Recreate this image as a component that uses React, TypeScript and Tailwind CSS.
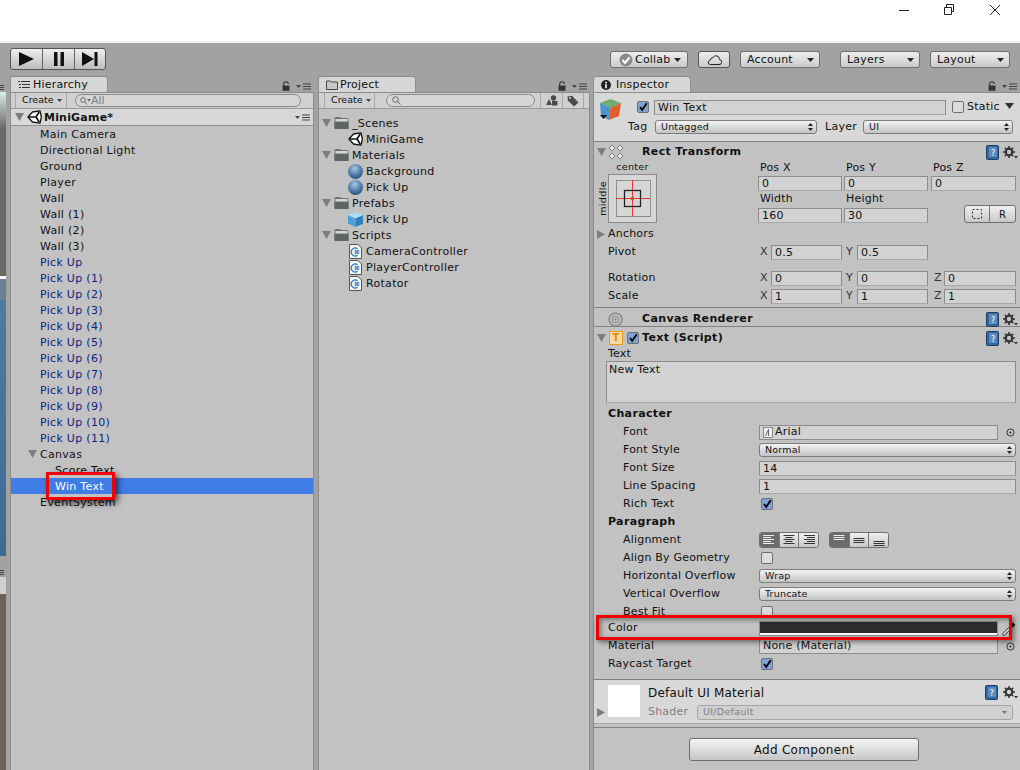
import React from 'react';

const hierarchyItems = [
  'Main Camera', 'Directional Light', 'Ground', 'Player', 'Wall', 'Wall (1)', 'Wall (2)', 'Wall (3)',
];
const pickUps = ['Pick Up', 'Pick Up (1)', 'Pick Up (2)', 'Pick Up (3)', 'Pick Up (4)', 'Pick Up (5)', 'Pick Up (6)', 'Pick Up (7)', 'Pick Up (8)', 'Pick Up (9)', 'Pick Up (10)', 'Pick Up (11)'];

const TriDown = ({ className = '' }: { className?: string }) => (
  <svg width="9" height="8" viewBox="0 0 9 8" className={`shrink-0 ${className}`}><polygon points="0,0 9,0 4.5,8" fill="#7d7d7d" /></svg>
);
const TriRight = ({ className = '' }: { className?: string }) => (
  <svg width="8" height="9" viewBox="0 0 8 9" className={`shrink-0 ${className}`}><polygon points="0,0 8,4.5 0,9" fill="#7d7d7d" /></svg>
);
const Caret = ({ className = '' }: { className?: string }) => (
  <svg width="7" height="4" viewBox="0 0 7 4" className={`shrink-0 ${className}`}><polygon points="0,0 7,0 3.5,4" fill="#222" /></svg>
);
const UpDown = () => (
  <svg width="5" height="8" viewBox="0 0 5 8" className="shrink-0"><polygon points="2.5,0 5,3 0,3" fill="#222" /><polygon points="0,5 5,5 2.5,8" fill="#222" /></svg>
);
const MenuIcon = () => (
  <svg width="15" height="7" viewBox="0 0 15 7" className="shrink-0">
    <polygon points="0,2 5,2 2.5,5" fill="#444" />
    <path d="M7 1H15M7 3.5H15M7 6H15" stroke="#444" strokeWidth="1" />
  </svg>
);
const LockIcon = () => (
  <svg width="8" height="10" viewBox="0 0 8 10" className="shrink-0">
    <path d="M1.7 5V3a2.3 2.3 0 0 1 4.6 0" fill="none" stroke="#333" strokeWidth="1.1" />
    <rect x="0.5" y="4.6" width="7" height="5.2" fill="#333" />
  </svg>
);
const UnityLogo = () => (
  <svg width="15" height="14" viewBox="0 0 15 14" className="shrink-0">
    <path d="M1 7 L5.5 2 L13 0.8 L14.4 7 L13 13.2 L5.5 12 Z" fill="#fff" stroke="#111" strokeWidth="1.3" strokeLinejoin="round" />
    <path d="M2 7 H9 L12.2 2 M9 7 L12.2 12" fill="none" stroke="#111" strokeWidth="1.7" />
  </svg>
);
const FolderIcon = () => (
  <svg width="15" height="14" viewBox="0 0 15 14" className="shrink-0">
    <path d="M0.5 3 Q0.5 1 2 1 H6 L7 2 H13 Q14.5 2 14.5 3.5 V13 H0.5 Z" fill="#6e7474" />
    <rect x="1.5" y="3" width="12" height="2.5" fill="#d5d5d5" />
    <rect x="0.5" y="6" width="14" height="7" fill="#5f6565" />
  </svg>
);
const SphereIcon = () => (
  <svg width="15" height="15" viewBox="0 0 14 14" className="shrink-0">
    <defs>
      <radialGradient id="sph" cx="45%" cy="30%" r="75%">
        <stop offset="0%" stopColor="#a9c6e2" />
        <stop offset="55%" stopColor="#4f7fb0" />
        <stop offset="100%" stopColor="#24476e" />
      </radialGradient>
    </defs>
    <circle cx="7" cy="7" r="7" fill="url(#sph)" />
  </svg>
);
const CubeIcon = () => (
  <svg width="15" height="15" viewBox="0 0 14 14" className="shrink-0">
    <polygon points="7,0 14,3 7,6 0,3" fill="#a9dcf5" />
    <polygon points="0,3 7,6 7,14 0,11" fill="#4fa0d8" />
    <polygon points="14,3 7,6 7,14 14,11" fill="#2f7fbc" />
  </svg>
);
const ScriptIcon = () => (
  <svg width="13" height="15" viewBox="0 0 13 15" className="shrink-0">
    <path d="M0.5 0.5 H9 L12.5 4 V14.5 H0.5 Z" fill="#f4f4f4" stroke="#555" />
    <path d="M8.5 4.7 A4 4 0 1 0 8.5 11.3" fill="none" stroke="#1674b4" strokeWidth="1.2" />
    <path d="M5.5 7 H10.5 M5.5 9 H10.5 M6.8 5.8 V10.2 M8.8 5.8 V10.2" stroke="#1674b4" strokeWidth="0.8" />
  </svg>
);
const HelpBook = () => (
  <svg width="13" height="15" viewBox="0 0 13 15" className="shrink-0">
    <rect x="0.5" y="0.5" width="12" height="14" rx="1" fill="#34679f" stroke="#1f3d63" />
    <rect x="3" y="2" width="8" height="10" fill="#5e8bbd" />
    <text x="7" y="10.5" fontSize="8" fontFamily="DejaVu Sans" textAnchor="middle" fill="#fff">?</text>
  </svg>
);
const GearIcon = () => (
  <svg width="15" height="13" viewBox="0 0 15 13" className="shrink-0">
    <circle cx="6" cy="6" r="3.3" fill="none" stroke="#333" strokeWidth="2.2" />
    <path d="M6 0V12M0 6H12M1.8 1.8L10.2 10.2M10.2 1.8L1.8 10.2" stroke="#333" strokeWidth="1.5" strokeDasharray="2 8" />
    <polygon points="11,10 15,10 13,12.5" fill="#333" />
  </svg>
);
const Check = ({ on = true, className = '' }: { on?: boolean; className?: string }) => (
  <span className={`flex items-center justify-center w-[12px] h-[12px] rounded-[2px] border border-[#6f6f6f] shrink-0 ${on ? 'bg-[#7fa3d4]' : 'bg-[#dcdcdc]'} ${className}`}>
    {on && (
      <svg width="12" height="12" viewBox="0 0 12 12"><path d="M2.5 6 L5 9.5 L10.5 1.5" fill="none" stroke="#000" strokeWidth="2.2" /></svg>
    )}
  </span>
);
const Field = ({ value = '', className = '' }: { value?: string; className?: string }) => (
  <div className={`h-[15px] flex items-center bg-[#d2d2d2] border border-[#8c8c8c] border-b-[#a8a8a8] pl-[3px] text-[11px] leading-none tracking-[0.3px] ${className}`}>{value}</div>
);
const Select = ({ value, className = '' }: { value: string; className?: string }) => (
  <div className={`h-[14px] flex items-center justify-between rounded-[3px] border border-[#7c7c7c] bg-gradient-to-b from-[#f2f2f2] to-[#c4c4c4] pl-[5px] pr-[3px] leading-none text-[9.5px] tracking-[0.2px] ${className}`}>
    <span>{value}</span>
    <UpDown />
  </div>
);
const ToolButton = ({ label, widthClass, gapClass }: { label: string; widthClass: string; gapClass: string }) => (
  <div className={`h-[17px] flex items-center justify-between rounded-[3px] border border-[#6f6f6f] bg-gradient-to-b from-[#efefef] to-[#c9c9c9] pl-[6px] pr-[5px] text-[11px] tracking-[0.2px] ${widthClass} ${gapClass}`}>
    <span className="mt-[2px]">{label}</span>
    <Caret />
  </div>
);
const Row = ({ label, indent = false, children, h = 'h-[18px]', lead = 'w-[165px]' }: { label?: string; indent?: boolean; children?: React.ReactNode; h?: string; lead?: string }) => (
  <div className={`flex items-center pr-[4px] shrink-0 ${h}`}>
    <div className={`shrink-0 text-[11px] tracking-[0.2px] ${lead} ${indent ? 'pl-[29px]' : 'pl-[14px]'}`}>{label}</div>
    <div className="flex-1 min-w-0 flex items-center">{children}</div>
  </div>
);
const XYZ = ({ axis, value, className = '', labelClass = 'w-[13px] pl-[2px]' }: { axis: string; value: string; className?: string; labelClass?: string }) => (
  <div className={`flex items-center ${className}`}>
    <span className={`text-[11px] text-[#333] shrink-0 ${labelClass}`}>{axis}</span>
    <Field value={value} className="flex-1 min-w-0" />
  </div>
);
const ComponentHeader = ({ icon, title, h, pt }: { icon: React.ReactNode; title: string; h: string; pt: string }) => (
  <div className={`flex items-center shrink-0 pl-[3px] pr-[2px] ${h} ${pt}`}>
    <div className="w-[45px] flex items-center shrink-0">{icon}</div>
    <div className="flex-1 font-bold text-[11px] tracking-[0.35px]">{title}</div>
    <HelpBook />
    <div className="w-[4px]" />
    <GearIcon />
  </div>
);
const AlignLines = ({ rows, y, dark, align }: { rows: number[]; y: number; dark?: boolean; align: 'l' | 'c' | 'r' }) => (
  <svg width="12" height="12" viewBox="0 0 12 12">
    {rows.map((w, i) => (
      <rect key={i} x={align === 'l' ? 0 : align === 'c' ? (12 - w) / 2 : 12 - w} y={y + i * 2} width={w} height="1" fill={dark ? '#eee' : '#333'} />
    ))}
  </svg>
);
const Seg = ({ active, children, right }: { active?: boolean; children: React.ReactNode; right?: boolean }) => (
  <div className={`flex-1 flex items-center justify-center ${right ? '' : 'border-r border-[#777]'} ${active ? 'bg-[#6b6b6b]' : 'bg-gradient-to-b from-[#f0f0f0] to-[#c8c8c8]'}`}>{children}</div>
);

const TabBar = ({ icon, title, gapClass }: { icon: React.ReactNode; title: string; gapClass: string }) => (
  <div className="h-[16px] flex items-end justify-between">
    <div className={`w-[98px] h-[16px] flex items-center pl-[7px] rounded-t-[3px] bg-[#d6d6d6] border border-b-0 border-[#8c8c8c] text-[11px] tracking-[0.2px] ${gapClass}`}>
      {icon}
      <span className="mt-[2px]">{title}</span>
    </div>
    <div className="flex items-center gap-[6px] pr-[3px] pb-[1px]">
      <LockIcon />
      <MenuIcon />
    </div>
  </div>
);

const HierarchyPanel = () => (
  <div className="w-[304px] shrink-0 flex flex-col">
    <TabBar
      title="Hierarchy"
      gapClass="gap-[3px]"
      icon={
        <svg width="12" height="9" viewBox="0 0 12 9"><path d="M0 1.5H2M3 1.5H12M1 4.5H3M4 4.5H12M1 7.5H3M4 7.5H12" stroke="#333" /></svg>
      }
    />
    <div className="flex-1 bg-[#c2c2c2] border-x border-t border-[#8c8c8c]">
      <div className="h-[16px] flex items-center bg-[#d0d0d0] border-b border-[#9a9a9a] pl-[4px] pr-[12px]">
        <div className="w-[52px] h-full flex items-center justify-between border-x border-[#a8a8a8] pl-[6px] pr-[4px] text-[9.5px]">
          <span>Create</span>
          <svg width="5" height="3" viewBox="0 0 5 3"><polygon points="0,0 5,0 2.5,3" fill="#444" /></svg>
        </div>
        <div className="flex-1 h-[13px] ml-[8px] rounded-full border border-[#888] bg-[#d6d6d6] flex items-center pl-[4px] text-[11px] text-[#7c7c7c]">
          <svg width="11" height="8" viewBox="0 0 11 8" className="shrink-0"><circle cx="3" cy="3" r="2.3" fill="none" stroke="#666" /><path d="M5 5L7 7.5" stroke="#666" /><polygon points="7,2 11,2 9,4.5" fill="#666" /></svg>
          <span className="leading-none">All</span>
        </div>
      </div>
      <div className="h-[17px] flex items-center bg-[#d8d8d8] border-b border-[#8f8f8f] pl-[4px] pr-[3px]">
        <TriDown />
        <div className="ml-[3px]"><UnityLogo /></div>
        <span className="ml-[2px] mt-[2px] flex-1 font-bold text-[11px] tracking-[0.2px]">MiniGame*</span>
        <MenuIcon />
      </div>
      <div className="text-[11px] tracking-[0.3px]">
        {hierarchyItems.map((name) => (
          <div key={name} className="h-[16px] flex items-center pt-[2px] pl-[29px]">{name}</div>
        ))}
        {pickUps.map((name) => (
          <div key={name} className="h-[16px] flex items-center pt-[2px] pl-[29px] text-[#0a2480]">{name}</div>
        ))}
        <div className="h-[16px] flex items-center pl-[17px]">
          <TriDown />
          <span className="ml-[3px] mt-[2px]">Canvas</span>
        </div>
        <div className="h-[16px] flex items-center pt-[2px] pl-[44px]">Score Text</div>
        <div className="h-[16px] flex items-center pt-[2px] pl-[44px] bg-[#3f7ce6] text-white">Win Text</div>
        <div className="h-[16px] flex items-center pt-[2px] pl-[29px]">EventSystem</div>
      </div>
    </div>
  </div>
);

const ProjectRow = ({ icon, name, child }: { icon: React.ReactNode; name: string; child?: boolean }) => (
  <div className={`h-[16px] flex items-center ${child ? 'pl-[29px]' : 'pl-[3px]'}`}>
    {!child && <TriDown className="mr-[3px]" />}
    <span className="w-[15px] shrink-0 flex items-center justify-center">{icon}</span>
    <span className="ml-[3px] mt-[2px]">{name}</span>
  </div>
);

const ProjectPanel = () => (
  <div className="w-[272px] shrink-0 flex flex-col">
    <TabBar
      title="Project"
      gapClass="gap-[2px]"
      icon={
        <svg width="12" height="10" viewBox="0 0 12 10"><path d="M0.5 9.5V1H4.5L5.5 2H11.5V9.5Z" fill="#c8c8c8" stroke="#444" /></svg>
      }
    />
    <div className="flex-1 bg-[#c2c2c2] border-x border-t border-[#8c8c8c]">
      <div className="h-[16px] flex items-center bg-[#d0d0d0] border-b border-[#9a9a9a] pl-[5px]">
        <div className="w-[51px] h-full flex items-center justify-between border-x border-[#a8a8a8] pl-[6px] pr-[3px] text-[9.5px]">
          <span>Create</span>
          <svg width="5" height="3" viewBox="0 0 5 3"><polygon points="0,0 5,0 2.5,3" fill="#444" /></svg>
        </div>
        <div className="w-[149px] h-[13px] ml-[11px] rounded-full border border-[#888] bg-[#d6d6d6] flex items-center pl-[5px]">
          <svg width="9" height="9" viewBox="0 0 9 9"><circle cx="3.5" cy="3.5" r="2.8" fill="none" stroke="#666" /><path d="M5.5 5.5L8.5 8.5" stroke="#666" /></svg>
        </div>
        <div className="w-[22px] h-full ml-[5px] flex items-center justify-center border-l border-[#a8a8a8]">
          <svg width="12" height="11" viewBox="0 0 12 11"><polygon points="3,4 6,10 0,10" fill="#4a4a4a" /><circle cx="7.5" cy="3" r="2.7" fill="#4a4a4a" /><rect x="6" y="6" width="5.5" height="4.5" fill="#4a4a4a" /></svg>
        </div>
        <div className="w-[22px] h-full flex items-center justify-center border-x border-[#a8a8a8]">
          <svg width="12" height="12" viewBox="0 0 12 12"><path d="M0.5 1.5 L5 0.8 L11.5 7.5 L7 11.5 L0.8 5.5 Z" fill="#4a4a4a" /><circle cx="3" cy="3" r="1" fill="#d0d0d0" /></svg>
        </div>
      </div>
      <div className="pt-[6px] text-[11px] tracking-[0.3px]">
        <ProjectRow icon={<FolderIcon />} name="_Scenes" />
        <ProjectRow icon={<UnityLogo />} name="MiniGame" child />
        <ProjectRow icon={<FolderIcon />} name="Materials" />
        <ProjectRow icon={<SphereIcon />} name="Background" child />
        <ProjectRow icon={<SphereIcon />} name="Pick Up" child />
        <ProjectRow icon={<FolderIcon />} name="Prefabs" />
        <ProjectRow icon={<CubeIcon />} name="Pick Up" child />
        <ProjectRow icon={<FolderIcon />} name="Scripts" />
        <ProjectRow icon={<ScriptIcon />} name="CameraController" child />
        <ProjectRow icon={<ScriptIcon />} name="PlayerController" child />
        <ProjectRow icon={<ScriptIcon />} name="Rotator" child />
      </div>
    </div>
  </div>
);

const RectTransformBody = () => (
  <div className="h-[148px] border-b border-[#808080] shrink-0">
    <div className="h-[65px] flex">
      <div className="w-[164px] shrink-0 flex pl-[3px]">
        <div className="w-[11px] h-[49px] mt-[14px] flex items-center justify-center">
          <span className="[writing-mode:vertical-rl] rotate-180 text-[9.5px] tracking-[0.4px] leading-none">middle</span>
        </div>
        <div className="flex flex-col items-center">
          <span className="h-[14px] text-[9.5px] tracking-[0.3px] leading-[14px]">center</span>
          <svg width="49" height="49" viewBox="0 0 49 49">
            <rect x="0.5" y="0.5" width="48" height="48" fill="#d6d6d6" stroke="#8a8a8a" />
            <rect x="8.5" y="6.5" width="34" height="36" fill="none" stroke="#8f8f8f" />
            <path d="M8 24.5H42M24.5 6V42" stroke="#e33" />
            <rect x="16.5" y="16.5" width="16" height="16" fill="none" stroke="#222" strokeWidth="1.3" />
            <rect x="23" y="23" width="3" height="3" fill="#a06a10" />
          </svg>
        </div>
      </div>
      <div className="flex-1 flex flex-col text-[11px] tracking-[0.2px]">
        <div className="flex h-[16px] items-center">
          <span className="w-[88px] pl-[2px]">Pos X</span><span className="w-[87px]">Pos Y</span><span>Pos Z</span>
        </div>
        <div className="flex gap-[2px] pr-[4px]">
          <Field value="0" className="w-[84px]" /><Field value="0" className="w-[84px]" /><Field value="0" className="flex-1 ml-[1px]" />
        </div>
        <div className="flex h-[17px] items-center">
          <span className="w-[88px] pl-[2px]">Width</span><span>Height</span>
        </div>
        <div className="flex gap-[2px] items-center">
          <Field value="160" className="w-[84px]" /><Field value="30" className="w-[84px]" />
          <div className="ml-[34px] mt-[-3px] w-[52px] h-[18px] flex rounded-[3px] border border-[#6f6f6f] bg-gradient-to-b from-[#f0f0f0] to-[#c8c8c8] text-[10px]">
            <div className="w-[25px] flex items-center justify-center border-r border-[#777]">
              <svg width="10" height="10" viewBox="0 0 10 10"><rect x="0.5" y="0.5" width="9" height="9" fill="none" stroke="#333" strokeDasharray="2 2" /></svg>
            </div>
            <div className="flex-1 flex items-center justify-center">R</div>
          </div>
        </div>
      </div>
    </div>
    <div className="h-[18px] flex items-center pl-[3px] text-[11px] tracking-[0.2px]">
      <TriRight />
      <span className="ml-[3px]">Anchors</span>
    </div>
    <Row label="Pivot" lead="w-[164px]">
      <XYZ axis="X" value="0.5" className="w-[84px]" /><XYZ axis="Y" value="0.5" className="w-[84px] ml-[2px]" />
    </Row>
    <div className="h-[8px]" />
    <Row label="Rotation" lead="w-[164px]">
      <XYZ axis="X" value="0" className="w-[84px]" /><XYZ axis="Y" value="0" className="w-[84px] ml-[2px]" /><XYZ axis="Z" value="0" className="ml-[2px] flex-1" labelClass="w-[14px] pl-[4px]" />
    </Row>
    <Row label="Scale" lead="w-[164px]">
      <XYZ axis="X" value="1" className="w-[84px]" /><XYZ axis="Y" value="1" className="w-[84px] ml-[2px]" /><XYZ axis="Z" value="1" className="ml-[2px] flex-1" labelClass="w-[14px] pl-[4px]" />
    </Row>
  </div>
);

const InspectorPanel = () => (
  <div className="flex-1 min-w-0 flex flex-col">
    <TabBar
      title="Inspector"
      gapClass="gap-[5px]"
      icon={
        <svg width="10" height="10" viewBox="0 0 10 10" className="shrink-0"><circle cx="5" cy="5" r="5" fill="#222" /><rect x="4.2" y="1.8" width="1.6" height="1.6" fill="#fff" /><rect x="4.2" y="4.2" width="1.6" height="4" fill="#fff" /></svg>
      }
    />
    <div className="flex-1 flex flex-col bg-[#c2c2c2] border-l border-t border-[#8c8c8c]">
      <div className="h-[49px] shrink-0 bg-[#d8d8d8] border-b border-[#808080] flex">
        <div className="w-[34px] shrink-0 pl-[5px] pt-[6px]">
          <svg width="23" height="22" viewBox="0 0 23 22">
            <polygon points="11.5,0 22,4 11.5,9 1,4" fill="#6fae74" />
            <polygon points="1,4 11.5,9 10,21 2,17" fill="#4d93cf" />
            <polygon points="22,4 11.5,9 10,21 20,17" fill="#de5f2a" />
            <polygon points="1,16 8,16 4.5,20" fill="#111" />
          </svg>
        </div>
        <div className="flex-1 min-w-0 flex flex-col pt-[6px]">
          <div className="h-[16px] flex items-center">
            <Check className="ml-[9px]" />
            <Field value="Win Text" className="ml-[5px] w-[292px] tracking-[0.3px]" />
            <Check on={false} className="ml-[6px]" />
            <span className="ml-[3px] text-[11px] tracking-[0.2px]">Static</span>
            <svg width="9" height="6" viewBox="0 0 9 6" className="ml-[5px] mb-[3px]"><polygon points="0,0 9,0 4.5,6" fill="#333" /></svg>
          </div>
          <div className="h-[17px] mt-[3px] flex items-center text-[11px] tracking-[0.3px]">
            <span className="w-[21px] mt-[2px]">Tag</span>
            <Select value="Untagged" className="ml-[6px] w-[162px]" />
            <span className="ml-[8px] w-[32px] mt-[2px]">Layer</span>
            <Select value="UI" className="ml-[6px] w-[150px]" />
          </div>
        </div>
      </div>
      <ComponentHeader h="h-[18px]" pt="pt-[2px]" title="Rect Transform" icon={
        <span className="flex items-center gap-[2px]">
          <TriDown />
          <svg width="16" height="16" viewBox="0 0 16 16"><g fill="#e2e2e2" stroke="#777" strokeWidth="0.9" strokeLinejoin="round"><polygon points="4,0.8 7,4 4,7 1,4" /><polygon points="12,0.8 15,4 12,7 9,4" /><polygon points="4,9 7,12 4,15.2 1,12" /><polygon points="12,9 15,12 12,15.2 9,12" /></g></svg>
        </span>
      } />
      <RectTransformBody />
      <div className="h-[19px] shrink-0 border-b border-[#808080]">
        <ComponentHeader h="h-[18px]" pt="pt-[4px]" title="Canvas Renderer" icon={
          <svg width="15" height="15" viewBox="0 0 14 14" className="ml-[11px]"><circle cx="7" cy="7" r="6" fill="none" stroke="#8f8f8f" strokeWidth="1.6" /><circle cx="7" cy="7" r="3" fill="none" stroke="#8f8f8f" /><circle cx="7" cy="7" r="1.2" fill="#8f8f8f" /></svg>
        } />
      </div>
      <div className="h-[20px] shrink-0 flex items-center pt-[2px] pl-[3px] pr-[2px]">
        <TriDown />
        <span className="ml-[3px] w-[14px] h-[14px] border border-[#f09a10] bg-[#f5d9a8] flex items-center justify-center text-[10px] font-bold text-[#e8860a] leading-none">T</span>
        <Check className="ml-[4px]" />
        <span className="ml-[3px] flex-1 font-bold text-[11px] tracking-[0.35px]">Text (Script)</span>
        <HelpBook />
        <div className="w-[4px]" />
        <GearIcon />
      </div>
      <div className="h-[14px] shrink-0 flex items-center pl-[14px] text-[11px] tracking-[0.2px]">Text</div>
      <div className="h-[42px] shrink-0 ml-[12px] mr-[4px] bg-[#d2d2d2] border border-[#8c8c8c] border-b-[#a8a8a8] pl-[2px] pt-[1px] text-[11px] tracking-[0.2px] leading-[14px]">New Text</div>
      <div className="h-[18px] mt-[2px] shrink-0 flex items-center pl-[14px] font-bold text-[11px] tracking-[0.35px]">Character</div>
      <Row label="Font" indent>
        <div className="flex-1 flex items-center">
          <div className="w-[239px] h-[15px] flex items-center bg-[#d2d2d2] border border-[#8c8c8c] pl-[3px] text-[11px] tracking-[0.2px]">
            <svg width="10" height="11" viewBox="0 0 10 11" className="shrink-0 mr-[2px]"><rect x="0.5" y="0.5" width="9" height="10" fill="#eee" stroke="#888" /><path d="M2.5 9L5.5 2.5V9" fill="none" stroke="#667" /></svg>
            <span>Arial</span>
          </div>
          <svg width="9" height="9" viewBox="0 0 9 9" className="ml-[8px]"><circle cx="4.5" cy="4.5" r="3.6" fill="none" stroke="#333" /><circle cx="4.5" cy="4.5" r="1.1" fill="#333" /></svg>
        </div>
      </Row>
      <Row label="Font Style" indent><Select value="Normal" className="flex-1" /></Row>
      <Row label="Font Size" indent><Field value="14" className="flex-1" /></Row>
      <Row label="Line Spacing" indent><Field value="1" className="flex-1" /></Row>
      <Row label="Rich Text" indent><Check className="ml-[2px]" /></Row>
      <div className="h-[18px] shrink-0 flex items-center pl-[14px] font-bold text-[11px] tracking-[0.35px]">Paragraph</div>
      <Row label="Alignment" indent>
        <div className="flex w-[60px] h-[16px] rounded-[3px] overflow-hidden border border-[#6f6f6f]">
          <Seg active><AlignLines rows={[11, 8, 11, 8, 11]} y={1} dark align="l" /></Seg>
          <Seg><AlignLines rows={[11, 7, 11, 7, 11]} y={1} align="c" /></Seg>
          <Seg right><AlignLines rows={[11, 8, 11, 8, 11]} y={1} align="r" /></Seg>
        </div>
        <div className="flex w-[60px] h-[16px] ml-[10px] rounded-[3px] overflow-hidden border border-[#6f6f6f]">
          <Seg active><AlignLines rows={[11, 11, 11]} y={1} dark align="c" /></Seg>
          <Seg><AlignLines rows={[11, 11, 11]} y={4} align="c" /></Seg>
          <Seg right><AlignLines rows={[11, 11, 11]} y={7} align="c" /></Seg>
        </div>
      </Row>
      <Row label="Align By Geometry" indent><Check on={false} className="ml-[2px]" /></Row>
      <Row label="Horizontal Overflow" indent><Select value="Wrap" className="flex-1" /></Row>
      <Row label="Vertical Overflow" indent><Select value="Truncate" className="flex-1" /></Row>
      <Row label="Best Fit" indent><Check on={false} className="ml-[2px]" /></Row>
      <Row label="Color" h="h-[15px] mb-[1px]">
        <div className="w-[239px] h-[15px] bg-[#2c2c2c] border border-[#8c8c8c] flex items-end">
          <div className="w-full h-[2px] bg-white" />
        </div>
        <svg width="14" height="14" viewBox="0 0 14 14" className="ml-[4px]"><path d="M1 13L9 5" stroke="#222" strokeWidth="3" /><path d="M1.5 12.5L9 5" stroke="#fff" strokeWidth="1.5" /><path d="M9 3L12 1.5M10.5 5L12.5 2" stroke="#111" strokeWidth="2" /></svg>
      </Row>
      <Row label="Material">
        <div className="w-[239px] h-[15px] flex items-center bg-[#d2d2d2] border border-[#8c8c8c] pl-[3px] text-[11px] tracking-[0.2px]">None (Material)</div>
        <svg width="9" height="9" viewBox="0 0 9 9" className="ml-[8px]"><circle cx="4.5" cy="4.5" r="3.6" fill="none" stroke="#333" /><circle cx="4.5" cy="4.5" r="1.1" fill="#333" /></svg>
      </Row>
      <Row label="Raycast Target"><Check className="ml-[2px]" /></Row>
      <div className="h-[6px] shrink-0" />
      <div className="h-[45px] shrink-0 bg-[#d8d8d8] border-y border-t-[#808080] border-b-[#a8a8a8] flex pl-[3px] pr-[2px]">
        <div className="flex items-end w-[11px] pb-[6px]"><TriRight /></div>
        <div className="w-[32px] h-[32px] mt-[5px] bg-white shrink-0" />
        <div className="flex-1 min-w-0 pl-[8px] flex flex-col">
          <div className="h-[24px] flex items-center justify-between text-[12px] tracking-[0.2px]">
            <span className="mt-[2px]">Default UI Material</span>
            <span className="flex items-center gap-[5px]">
              <HelpBook />
              <GearIcon />
            </span>
          </div>
          <div className="h-[16px] flex items-center text-[11px] tracking-[0.2px] text-[#7f7f7f]">
            <span className="w-[49px] shrink-0">Shader</span>
            <div className="flex-1 h-[15px] mr-[5px] flex items-center justify-between rounded-[3px] border border-[#a5a5a5] bg-[#d0d0d0] pl-[5px] pr-[5px] text-[9.5px] tracking-[0.3px]">
              <span>UI/Default</span>
              <svg width="5" height="3" viewBox="0 0 5 3"><polygon points="0,0 5,0 2.5,3" fill="#777" /></svg>
            </div>
          </div>
        </div>
      </div>
      <div className="h-[4px] shrink-0 border-b border-[#808080]" />
      <div className="flex-1 flex justify-center pt-[10px] pr-[6px]">
        <div className="w-[230px] h-[23px] flex items-center justify-center rounded-[3px] border border-[#6f6f6f] bg-gradient-to-b from-[#f4f4f4] to-[#c6c6c6] text-[12px] tracking-[0.3px]">Add Component</div>
      </div>
    </div>
  </div>
);

export default function App() {
  return (
    <div className="relative w-[1020px] h-[770px] overflow-hidden flex flex-col bg-[#a2a2a2] text-[#111] font-['DejaVu_Sans',sans-serif]">
      <div className="h-[41px] shrink-0 bg-white flex justify-end items-start">
        <svg width="122" height="20" viewBox="0 0 122 20">
          <path d="M1 10.5H11" stroke="#222" />
          <path d="M46.5 7.5H53.5V14.5H46.5Z M48.5 7V4.5H55.5V11.5H53.5" fill="none" stroke="#222" />
          <path d="M92 5L102 15M102 5L92 15" stroke="#222" />
        </svg>
      </div>
      <div className="h-[2px] shrink-0 bg-[#f0f0f0]" />
      <div className="h-[33px] shrink-0 flex items-start pl-[10px]">
        <div className="mt-[5px] flex h-[22px] w-[96px] rounded-[3px] border border-[#555] bg-gradient-to-b from-[#efefef] to-[#bdbdbd]">
          <div className="w-[32px] flex items-center justify-center border-r border-[#666]">
            <svg width="15" height="14" viewBox="0 0 15 14"><polygon points="0,0 15,7 0,14" fill="#111" /></svg>
          </div>
          <div className="w-[32px] flex items-center justify-center border-r border-[#666]">
            <svg width="10" height="14" viewBox="0 0 10 14"><rect width="3.5" height="14" fill="#111" /><rect x="6.5" width="3.5" height="14" fill="#111" /></svg>
          </div>
          <div className="flex-1 flex items-center justify-center">
            <svg width="16" height="14" viewBox="0 0 16 14"><polygon points="0,0 12,7 0,14" fill="#111" /><rect x="12.5" width="3" height="14" fill="#111" /></svg>
          </div>
        </div>
        <div className="ml-[504px] mt-[8px] flex">
          <div className="w-[78px] h-[17px] flex items-center rounded-[3px] border border-[#6f6f6f] bg-gradient-to-b from-[#efefef] to-[#c9c9c9] pl-[8px] pr-[6px] text-[11px] tracking-[0.2px]">
            <svg width="14" height="14" viewBox="0 0 14 14" className="shrink-0"><circle cx="7" cy="7" r="6.5" fill="#8a8a8a" /><path d="M3.5 7L6 10L10.5 4.5" fill="none" stroke="#fff" strokeWidth="2" /></svg>
            <span className="ml-[2px] mt-[2px] flex-1">Collab</span>
            <Caret />
          </div>
          <div className="ml-[10px] w-[32px] h-[17px] flex items-center justify-center rounded-[3px] border border-[#555] bg-gradient-to-b from-[#efefef] to-[#c9c9c9]">
            <svg width="15" height="10" viewBox="0 0 15 10"><path d="M3.5 9.5H12a2.5 2.5 0 0 0 .5-5A3.5 3.5 0 0 0 6 2.5 3.5 3.5 0 0 0 3 5.5a2 2 0 0 0 .5 4Z" fill="none" stroke="#222" /></svg>
          </div>
          <ToolButton label="Account" widthClass="w-[80px]" gapClass="ml-[10px]" />
          <ToolButton label="Layers" widthClass="w-[80px]" gapClass="ml-[20px]" />
          <ToolButton label="Layout" widthClass="w-[80px]" gapClass="ml-[10px]" />
        </div>
      </div>
      <div className="flex-1 min-h-0 flex">
        <div className="w-[6px] shrink-0 flex flex-col">
          <div className="h-[16px] shrink-0 flex items-end pb-[2px]">
            <svg width="6" height="5" viewBox="0 0 6 5"><path d="M0 0.5H4M0 2.5H4M0 4.5H4" stroke="#444" /></svg>
          </div>
          <div className="h-[184px] shrink-0 bg-gradient-to-b from-[#d8efec] via-[#6c6762] via-20% to-[#6c6762]" />
          <div className="h-[3px] shrink-0 bg-white" />
          <div className="h-[21px] shrink-0 bg-[#6d7f96]" />
          <div className="h-[256px] shrink-0 bg-gradient-to-b from-[#4f7aa6] to-[#3f6a96]" />
          <div className="h-[21px] shrink-0 flex items-end pb-[2px]">
            <svg width="6" height="5" viewBox="0 0 6 5"><path d="M0 0.5H4M0 2.5H4M0 4.5H4" stroke="#444" /></svg>
          </div>
          <div className="h-[17px] shrink-0 bg-[#d0d0d0]" />
          <div className="flex-1 bg-[#6b625c]" />
        </div>
        <div className="w-[4px] shrink-0" />
        <HierarchyPanel />
        <div className="w-[4px] shrink-0" />
        <ProjectPanel />
        <div className="w-[3px] shrink-0" />
        <InspectorPanel />
      </div>
      <div className="absolute left-[46px] top-[472px] w-[69px] h-[28px] border-[3px] border-[#f00000] shadow-[3px_3px_6px_rgba(0,0,0,0.65)]" />
      <div className="absolute left-[596px] top-[615px] w-[416px] h-[25px] border-[3px] border-[#f00000] shadow-[2px_2px_5px_rgba(0,0,0,0.5),inset_2px_2px_5px_rgba(0,0,0,0.4)]" />
    </div>
  );
}
